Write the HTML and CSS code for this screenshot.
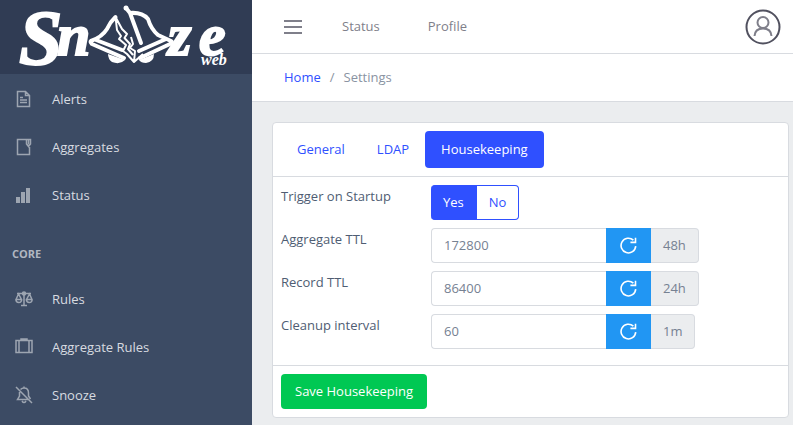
FILE: index.html
```html
<!DOCTYPE html>
<html lang="en">
<head>
<meta charset="utf-8">
<meta name="viewport" content="width=device-width, initial-scale=1">
<title>Settings - Snooze web</title>
<link rel="stylesheet" href="styles.css">
</head>
<body>
<svg class="sprite" aria-hidden="true">
  <symbol id="reload" viewBox="0 0 16 16">
    <path d="M14.8 8.6A6.9 6.9 0 1 1 12.6 3M14.6 .6v4.5H9.8" fill="none" stroke="currentColor" stroke-width="1.5"/>
  </symbol>
</svg>
<div class="app">
  <aside class="sidebar">
    <a class="brand" href="#" aria-label="Snooze web">
      <svg class="logo" viewBox="0 0 252 74">
        <g class="logo-text">
          <text class="logo-s" x="19" y="64">S</text>
          <text class="logo-n" x="57" y="55">n</text>
          <text class="logo-n" x="168" y="55">z</text>
          <text class="logo-n" x="199" y="55">e</text>
          <text class="logo-web" x="201" y="65">web</text>
        </g>
        <path class="logo-fill" d="M108 54L125 60Q120 65 112 62Q108 59 108 54ZM139 60L154 54Q154 62 146 63Q141 63 139 60Z"/>
        <path class="logo-line" d="M115.500 17Q110 22 107 29Q102 37 91 41Q90 42 92 44L124 58M96 40L122 50"/>
        <path class="logo-line" d="M126 8L130 13Q142 12 148 19Q151 29 158 35L171 41Q173 42 170 44L140 58M130 13L141 43M166 39L139 51"/>
        <circle class="logo-fill" cx="126" cy="8" r="2.500"/>
        <path class="logo-thin" d="M115.500 17L122 29L127 34L124.500 38L130 44L128 49L133 55M115.500 17L117 30L121 36L119 39L126 45L123 51L127 54L134 62M131 37L133 44L130 48L135 51L134 62L143 54"/>
      </svg>
    </a>
    <nav class="side-nav">
      <a href="#"><svg viewBox="0 0 18 18"><path d="M2.5 1.5h8l4 4v11h-12zM10.5 1.5v4h4M5 7.5h3M5 10h7M5 12.500h7"/></svg>Alerts</a>
      <a href="#"><svg viewBox="0 0 18 18"><path d="M12 1.500H2.500v15h12V9M11.500 1.500h4V6l-2 2.500-2-2.500zM13.500 1.500v5"/></svg>Aggregates</a>
      <a href="#"><svg viewBox="0 0 18 18"><path class="solid" d="M1 11h4v6H1zM6 6h4v11H6zM11 2h4v15h-4z"/></svg>Status</a>
      <h2>CORE</h2>
      <a href="#"><svg viewBox="0 0 18 18"><path d="M2 3.500h14M9 2v13M6 15.500h6M3.500 4L1 9.500h5.500zM14.500 4L11.500 9.500H17zM1 9.500q0 3 2.800 3t2.700-3M11.500 9.500q0 3 2.800 3t2.700-3"/><circle cx="9" cy="3.500" r="1.500"/></svg>Rules</a>
      <a href="#"><svg viewBox="0 0 18 18"><path d="M1 2.500h16v12H1zM4 2.500v12M14 2.500v12M6 2.500v-1.500h6v1.500"/></svg>Aggregate Rules</a>
      <a href="#"><svg viewBox="0 0 18 18"><path d="M1 1l16 16M5.500 3.500Q7 2 9 2q4.500 0 4.500 5v3l2 3M4.500 6v4l-2 3.500H13M7 15q2 3 4 0M9 .500V2"/></svg>Snooze</a>
    </nav>
  </aside>
  <div class="page">
    <header class="topbar">
      <button class="menu" type="button" aria-label="Toggle menu"><svg viewBox="0 0 18 14"><path d="M0 1h18M0 7h18M0 13h18"/></svg></button>
      <nav class="top-nav"><a href="#">Status</a><a href="#">Profile</a></nav>
      <button class="avatar" type="button" aria-label="Account"><svg viewBox="0 0 36 36"><circle class="ring" cx="18" cy="18" r="16.500"/><circle cx="18" cy="13.500" r="5.500"/><path d="M9.500 27Q10 19.500 18 19.500T26.500 27"/></svg></button>
    </header>
    <nav class="breadcrumb" aria-label="Breadcrumb"><a href="#">Home</a><span>/</span><span>Settings</span></nav>
    <main>
      <form class="card">
        <div class="tabs">
          <button type="button">General</button>
          <button type="button">LDAP</button>
          <button type="button" class="active">Housekeeping</button>
        </div>
        <div class="fields">
          <div class="field">
            <span class="label" id="trigger">Trigger on Startup</span>
            <div class="group toggle" role="group" aria-labelledby="trigger">
              <button type="button" class="active" aria-pressed="true">Yes</button>
              <button type="button" aria-pressed="false">No</button>
            </div>
          </div>
          <div class="field">
            <label class="label" for="aggregate">Aggregate TTL</label>
            <div class="group">
              <input id="aggregate" type="text" value="172800">
              <button class="reset" type="button" aria-label="Reset aggregate TTL"><svg><use href="#reload"/></svg></button>
              <span class="unit">48h</span>
            </div>
          </div>
          <div class="field">
            <label class="label" for="record">Record TTL</label>
            <div class="group">
              <input id="record" type="text" value="86400">
              <button class="reset" type="button" aria-label="Reset record TTL"><svg><use href="#reload"/></svg></button>
              <span class="unit">24h</span>
            </div>
          </div>
          <div class="field">
            <label class="label" for="cleanup">Cleanup interval</label>
            <div class="group">
              <input id="cleanup" type="text" value="60">
              <button class="reset" type="button" aria-label="Reset cleanup interval"><svg><use href="#reload"/></svg></button>
              <span class="unit">1m</span>
            </div>
          </div>
        </div>
        <footer><button class="save" type="submit">Save Housekeeping</button></footer>
      </form>
    </main>
  </div>
</div>
</body>
</html>
```
FILE: styles.css
```css
* { box-sizing: border-box; }

body {
  margin: 0;
  background: #ebedef;
  color: #4f5d73;
  font: 13px/21px "Open Sans", "Noto Sans", sans-serif;
}

button, input { font: inherit; color: inherit; margin: 0; }
button { border: 0; padding: 0; background: none; cursor: pointer; }
a { text-decoration: none; color: inherit; }
svg { display: block; fill: none; stroke: currentColor; }
.sprite { display: none; }

.app { display: flex; min-height: 100vh; }

.sidebar { flex: 0 0 252px; background: #3c4b64; color: #d8dbe0; }
.brand { display: block; background: #303c54; }
.logo { width: 100%; overflow: visible; }
.logo-text { fill: #fff; stroke: #fff; font-family: "Liberation Serif", serif; font-weight: bold; font-style: italic; }
.logo-s { font-size: 78px; stroke-width: 2px; }
.logo-n { font-size: 60px; stroke-width: 2px; }
.logo-web { font-size: 16px; stroke-width: 0; }
.logo-fill { fill: #fff; stroke: none; }
.logo-line { stroke: #fff; stroke-width: 4px; stroke-linejoin: round; stroke-linecap: round; }
.logo-thin { stroke: #fff; stroke-width: 2px; stroke-linejoin: round; }

.side-nav { padding-top: 1px; }
.side-nav a { display: flex; align-items: center; gap: 19px; height: 48px; padding: 0 15px; }
.side-nav svg { width: 18px; height: 18px; color: #9da5b1; stroke-width: 1.5px; }
.side-nav .solid { fill: currentColor; stroke: none; }
.side-nav h2 { margin: 0; padding: 24px 12px 11px; font-size: 11px; line-height: 21px; color: #b1b7c1; }

.page { flex: 1; min-width: 0; }
.topbar { display: flex; align-items: center; height: 54px; padding: 0 12px 0 32px; background: #fff; border-bottom: 1px solid #d8dbe0; color: #7f7f8a; }
.menu svg { width: 18px; height: 14px; stroke-width: 2px; }
.top-nav { display: flex; gap: 48px; margin-left: 40px; }
.avatar { margin-left: auto; }
.avatar svg { width: 36px; height: 36px; stroke-width: 2px; }
.avatar .ring { stroke: #51515f; }

.breadcrumb { display: flex; gap: 9px; padding: 13px 32px; background: #fff; border-bottom: 1px solid #d8dbe0; color: #8a93a2; }
.breadcrumb a { color: #2f50ff; }

main { padding: 20px 4px 7px 20px; }
.card { background: #fff; border: 1px solid #d8dbe0; border-radius: 4px; }
.tabs { display: flex; padding: 8px; border-bottom: 1px solid #d8dbe0; }
.tabs button { padding: 8px 16px; border-radius: 4px; color: #2f50ff; }
.tabs .active { background: #2f50ff; color: #fff; }

.fields { display: grid; gap: 8px; padding: 8px 8px 16px; }
.field { display: grid; grid-template-columns: 150px 1fr; }
.label { line-height: 22px; }
.group { display: flex; height: 35px; }

.toggle button { padding: 0 12px; border: 1px solid #2f50ff; border-left: 0; border-radius: 0 4px 4px 0; color: #2f50ff; }
.toggle .active { border-radius: 4px 0 0 4px; background: #2f50ff; color: #fff; }

.group input { width: 175px; padding: 0 12px; border: 1px solid #d8dbe0; border-right: 0; border-radius: 4px 0 0 4px; background: #fff; color: #768192; }
.reset { display: grid; place-items: center; width: 45px; background: #2196f3; color: #fff; }
.reset svg { width: 17px; height: 17px; }
.unit { padding: 0 12px; border: 1px solid #d8dbe0; border-left: 0; border-radius: 0 4px 4px 0; background: #ebedef; color: #768192; line-height: 33px; }

footer { padding: 8px; border-top: 1px solid #d8dbe0; }
.save { height: 35px; padding: 0 14px; border-radius: 4px; background: #00c853; color: #fff; }
```
